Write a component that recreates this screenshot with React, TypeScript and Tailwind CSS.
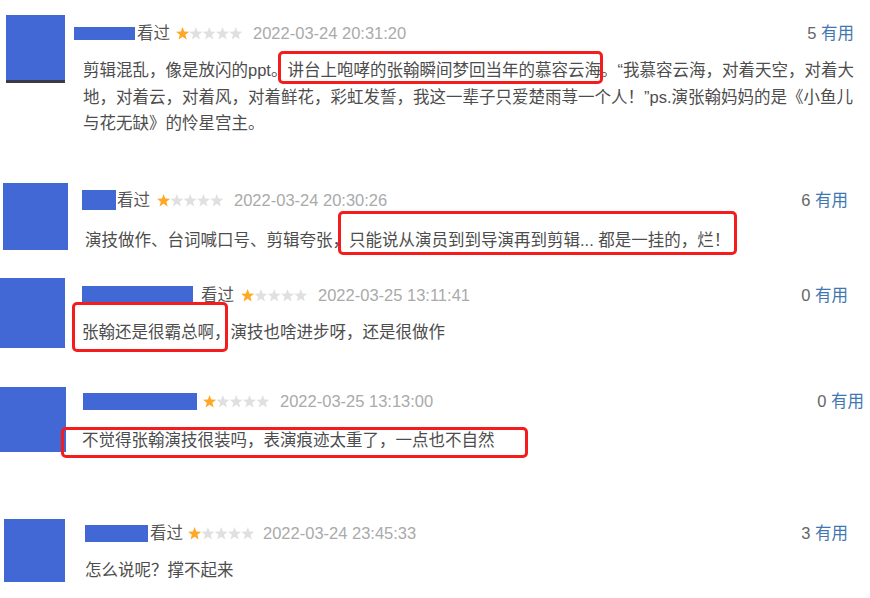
const FONT = { fontFamily: '"Liberation Sans", "Noto Sans CJK SC", sans-serif' };

const Stars = () => {
  const pts = '6.6,0 8.3,4.55 13.16,4.77 9.36,7.8 10.66,12.48 6.6,9.8 2.54,12.48 3.84,7.8 0.04,4.77 4.9,4.55';
  return (
    <svg width="67" height="13" viewBox="0 0 67 13" className="shrink-0">
      {[0, 1, 2, 3, 4].map((i) => (
        <polygon key={i} points={pts} transform={`translate(${i * 13.3} 0)`} fill={i === 0 ? '#ffa826' : '#e0e0e0'} />
      ))}
    </svg>
  );
};

const Useful = ({ n }: { n: number }) => (
  <span className="ml-auto whitespace-nowrap">
    <span className="text-[#666]">{n} </span>
    <span className="text-[#3f78b0]">有用</span>
  </span>
);

const RedBox = ({ className }: { className: string }) => (
  <div className={`absolute rounded-[5px] border-[3px] border-[#f41c1c] ${className}`} />
);

export default function App() {
  return (
    <div className="w-[870px] h-[598px] overflow-hidden bg-white text-[16.5px] text-[#4d4d4d]" style={FONT}>
      {/* 1 */}
      <div className="relative flex h-[170px]">
        <div className="ml-[6px] mt-[15px] w-[59px] h-[68px] shrink-0 bg-[#4168d4] border-b-[3px] border-[#3a3a48]" />
        <div className="ml-[9px] flex-1 pr-[22px]">
          <div className="mt-[24px] h-[18px] flex items-center leading-none">
            <div className="w-[61px] h-[13px] bg-[#4168d4]" />
            <span className="ml-[2px] text-[#555]">看过</span>
            <div className="ml-[6px]"><Stars /></div>
            <span className="ml-[10px] text-[#aaa]">2022-03-24 20:31:20</span>
            <Useful n={5} />
          </div>
          <p className="ml-[9px] mt-[15px] leading-[26.5px] whitespace-nowrap">
            剪辑混乱，像是放闪的ppt。讲台上咆哮的张翰瞬间梦回当年的慕容云海。“我慕容云海，对着天空，对着大
            <br />
            地，对着云，对着风，对着鲜花，彩虹发誓，我这一辈子只爱楚雨荨一个人！”ps.演张翰妈妈的是《小鱼儿
            <br />
            与花无缺》的怜星宫主。
          </p>
        </div>
        <RedBox className="left-[278px] top-[51px] w-[325px] h-[33px]" />
      </div>

      {/* 2 */}
      <div className="relative flex h-[100px]">
        <div className="ml-[3px] mt-[13px] w-[65px] h-[67px] shrink-0 bg-[#4168d4]" />
        <div className="ml-[14px] flex-1 pr-[22px]">
          <div className="mt-[20px] h-[20px] flex items-center leading-none">
            <div className="w-[34px] h-[20px] bg-[#4168d4]" />
            <span className="ml-[1px] text-[#555]">看过</span>
            <div className="ml-[7px]"><Stars /></div>
            <span className="ml-[10px] text-[#aaa]">2022-03-24 20:30:26</span>
            <Useful n={6} />
          </div>
          <p className="ml-[3px] mt-[17px] leading-[26.5px] whitespace-nowrap">
            演技做作、台词喊口号、剪辑夸张，只能说从演员到到导演再到剪辑... 都是一挂的，烂！
          </p>
        </div>
        <RedBox className="left-[338px] top-[41px] w-[399px] h-[44px]" />
      </div>

      {/* 3 */}
      <div className="relative flex h-[105px]">
        <div className="mt-[8px] w-[65px] h-[70px] shrink-0 bg-[#4168d4]" />
        <div className="ml-[17px] flex-1 pr-[22px]">
          <div className="mt-[14px] h-[22px] flex items-center leading-none">
            <div className="w-[111px] h-[19px] bg-[#4168d4]" />
            <span className="ml-[8px] text-[#555]">看过</span>
            <div className="ml-[7px]"><Stars /></div>
            <span className="ml-[10px] text-[#aaa]">2022-03-25 13:11:41</span>
            <Useful n={0} />
          </div>
          <p className="mt-[13px] leading-[26.5px] whitespace-nowrap">
            张翰还是很霸总啊，演技也啥进步呀，还是很做作
          </p>
        </div>
        <RedBox className="left-[72px] top-[32px] w-[156px] h-[50px]" />
      </div>

      {/* 4 */}
      <div className="relative flex h-[125px]">
        <div className="mt-[12px] w-[66px] h-[65px] shrink-0 bg-[#4168d4]" />
        <div className="ml-[17px] flex-1 pr-[6px]">
          <div className="mt-[18px] h-[17px] flex items-center leading-none">
            <div className="w-[114px] h-[17px] bg-[#4168d4]" />
            <div className="ml-[6px]"><Stars /></div>
            <span className="ml-[10px] text-[#aaa]">2022-03-25 13:13:00</span>
            <Useful n={0} />
          </div>
          <p className="-ml-[1px] mt-[17px] leading-[26.5px] whitespace-nowrap">
            不觉得张翰演技很装吗，表演痕迹太重了，一点也不自然
          </p>
        </div>
        <RedBox className="left-[61px] top-[52px] w-[467px] h-[31px]" />
      </div>

      {/* 5 */}
      <div className="relative flex h-[98px]">
        <div className="ml-[4px] mt-[19px] w-[61px] h-[63px] shrink-0 bg-[#4168d4]" />
        <div className="ml-[20px] flex-1 pr-[22px]">
          <div className="mt-[23px] h-[20px] flex items-center leading-none">
            <div className="w-[63px] h-[17px] bg-[#4168d4]" />
            <span className="ml-[2px] text-[#555]">看过</span>
            <div className="ml-[5px]"><Stars /></div>
            <span className="ml-[8px] text-[#aaa]">2022-03-24 23:45:33</span>
            <Useful n={3} />
          </div>
          <p className="mt-[14px] leading-[26.5px] whitespace-nowrap">怎么说呢？撑不起来</p>
        </div>
      </div>
    </div>
  );
}
